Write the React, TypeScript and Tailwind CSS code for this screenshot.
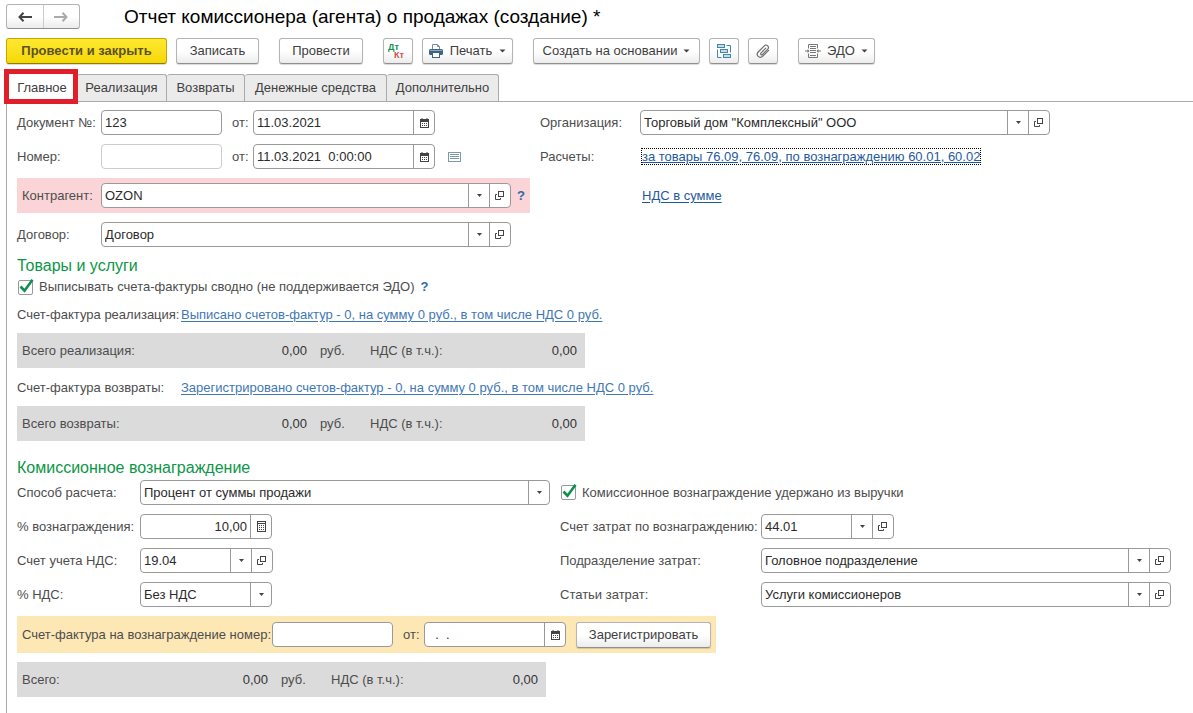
import { useId, type ReactNode } from "react";

function Triangle({ large }: { large?: boolean }) {
  return (
    <svg
      width={large ? 7 : 5}
      height={large ? 4 : 3}
      viewBox={large ? "0 0 7 4" : "0 0 5 3"}
      aria-hidden="true"
      className="shrink-0"
    >
      <path d={large ? "M0.500 0.500h6L3.500 3.500z" : "M0 0h5L2.500 3z"} fill="#444" />
    </svg>
  );
}

function OpenIcon() {
  return (
    <svg width="10" height="10" viewBox="0 0 10 10" fill="none" stroke="#444" aria-hidden="true">
      <rect x="3.5" y="0.5" width="5" height="5" />
      <path d="M2 3.5H0.500v5h5V7" />
    </svg>
  );
}

function CalendarIcon() {
  return (
    <svg width="9" height="10" viewBox="0 0 9 10" aria-hidden="true">
      <path d="M0 1h1.500V0h1v1h4V0h1v1H9v9H0z" fill="#444" />
      <path d="M1 4h7v5H1z" fill="#fff" />
      <path d="M2 5h1v1H2zM4 5h1v1H4zM6 5h1v1H6zM2 7h1v1H2zM4 7h1v1H4zM6 7h1v1H6z" fill="#444" />
    </svg>
  );
}

function CalculatorIcon() {
  return (
    <svg width="9" height="11" viewBox="0 0 9 11" aria-hidden="true">
      <path d="M0 0h9v11H0z" fill="#444" />
      <path d="M1 1h7v1H1zM1 3h7v7H1z" fill="#fff" />
      <path d="M2 4h1v1H2zM4 4h1v1H4zM6 4h1v1H6zM2 6h1v1H2zM4 6h1v1H4zM6 6h1v1H6zM2 8h1v1H2zM4 8h1v1H4zM6 8h1v1H6z" fill="#444" />
    </svg>
  );
}

function ListIcon() {
  return (
    <svg width="13" height="10" viewBox="0 0 13 10" fill="none" stroke="#7d98a8" aria-hidden="true">
      <rect x="0.5" y="0.5" width="12" height="9" />
      <path d="M2 2.5h9M2 4.5h9M2 6.5h9" />
    </svg>
  );
}

function ArrowIcon({ back, color }: { back?: boolean; color: string }) {
  return (
    <svg width="14" height="10" viewBox="0 0 14 10" fill="none" stroke={color} strokeWidth="2" aria-hidden="true">
      {back ? <path d="M5.5 0.8L1.5 5l4 4.2M1.5 5H14" /> : <path d="M8.5 0.8l4 4.2-4 4.2M12.5 5H0" />}
    </svg>
  );
}

function PrinterIcon() {
  return (
    <svg width="14" height="14" viewBox="0 0 14 14" aria-hidden="true">
      <path d="M3.500 5V0.500h5l2 2V5" fill="#fff" stroke="#7a8b99" />
      <path d="M8.500 0.500v2h2" fill="none" stroke="#7a8b99" />
      <rect x="0" y="5" width="14" height="6" rx="1.500" fill="#3d6385" />
      <path d="M1 6.500h12" stroke="#8fabc3" />
      <rect x="3.5" y="8.5" width="7" height="5" fill="#fff" stroke="#3d6385" />
    </svg>
  );
}

function StructureIcon() {
  return (
    <svg width="15" height="15" viewBox="0 0 15 15" fill="none" stroke="#4684a8" aria-hidden="true">
      <rect x="0.5" y="0.5" width="7" height="3" fill="#c5dcea" />
      <rect x="3.5" y="5.5" width="7" height="3" fill="#c5dcea" />
      <rect x="6.5" y="10.5" width="7" height="3" fill="#c5dcea" />
      <path d="M9.500 1.500h4v7M0.500 5.500v8h4" />
    </svg>
  );
}

function ClipIcon() {
  return (
    <svg width="14" height="14" viewBox="0 0 14 14" fill="none" stroke="#6e6e6e" strokeWidth="1.2" strokeLinecap="round" aria-hidden="true">
      <path d="M9.700 4.200L4.900 9.200a1 1 0 0 0 1.500 1.400L11.700 5.200a2.400 2.400 0 0 0-3.400-3.400L2.200 8a3.100 3.100 0 0 0 4.400 4.400L12.600 6.300" />
    </svg>
  );
}

function ExchangeIcon() {
  return (
    <svg width="16" height="14" viewBox="0 0 16 14" fill="none" stroke="#777" aria-hidden="true">
      <path d="M3.500 4.500v-4h9v4M3.500 9.500v4h9v-4" />
      <path d="M5 2.500h6M5 4.500h6M5 6.500h6M5 8.500h6M5 11.500h6" />
      <path d="M0 7h4M12 7h4" />
      <path d="M2.500 5l2 2-2 2zM13.500 5l-2 2 2 2z" fill="#777" stroke="none" />
    </svg>
  );
}

const buttonBase =
  "flex h-[26px] shrink-0 items-center justify-center rounded-[3px] border border-[#b4b4b4] border-b-[#8f8f8f] bg-linear-to-b from-white from-50% to-[#ececec] text-[#404040] shadow-[0_1px_1px_#00000026]";

function ToolButton({ children, className, label }: { children: ReactNode; className: string; label?: string }) {
  return (
    <button type="button" aria-label={label} className={`${buttonBase} ${className}`}>
      {children}
    </button>
  );
}

type CellKind = "menu" | "open" | "date" | "calc";

const cellLabels: Record<CellKind, string> = {
  menu: "Выбрать из списка",
  open: "Открыть",
  date: "Календарь",
  calc: "Калькулятор",
};

function Cell({ kind }: { kind: CellKind }) {
  return (
    <button
      type="button"
      aria-label={cellLabels[kind]}
      className="flex w-[21px] shrink-0 items-center justify-center border-l border-[#999]"
    >
      {kind === "menu" && <Triangle />}
      {kind === "open" && <OpenIcon />}
      {kind === "date" && <CalendarIcon />}
      {kind === "calc" && <CalculatorIcon />}
    </button>
  );
}

interface FieldProps {
  label: string;
  value?: string;
  labelClass?: string;
  boxClass: string;
  cells?: CellKind[];
  right?: boolean;
  faint?: boolean;
}

function Field({ label, value = "", labelClass = "", boxClass, cells = [], right, faint }: FieldProps) {
  const id = useId();
  return (
    <>
      <label htmlFor={id} className={`shrink-0 ${labelClass}`}>
        {label}
      </label>
      <div
        className={`flex h-[25px] min-w-0 overflow-hidden rounded-[4px] border bg-white ${faint ? "border-[#ccc]" : "border-[#999]"} ${boxClass}`}
      >
        <input
          id={id}
          type="text"
          defaultValue={value}
          className={`w-full min-w-0 flex-1 px-[3px] text-[#2b2b2b] outline-none ${right ? "text-right" : ""}`}
        />
        {cells.map((kind) => (
          <Cell key={kind} kind={kind} />
        ))}
      </div>
    </>
  );
}

function SelectField({ label, value, boxClass }: { label: string; value: string; boxClass: string }) {
  const id = useId();
  return (
    <>
      <label htmlFor={id} className="w-[123px] shrink-0">
        {label}
      </label>
      <div className={`grid h-[25px] grid-cols-[1fr_21px] overflow-hidden rounded-[4px] border border-[#999] bg-white ${boxClass}`}>
        <select id={id} className="col-span-2 col-start-1 row-start-1 appearance-none px-[3px] text-[#2b2b2b] outline-none">
          <option>{value}</option>
        </select>
        <span className="pointer-events-none col-start-2 row-start-1 flex items-center justify-center border-l border-[#999]">
          <Triangle />
        </span>
      </div>
    </>
  );
}

function Check({ label }: { label: string }) {
  return (
    <label className="flex items-center gap-[5px]">
      <span className="grid size-[17px] shrink-0">
        <input
          type="checkbox"
          defaultChecked
          className="peer col-start-1 row-start-1 m-px size-[15px] appearance-none rounded-[2px] border border-[#999] bg-white"
        />
        <svg
          viewBox="0 0 17 17"
          fill="none"
          stroke="#0f9050"
          strokeWidth="2.600"
          aria-hidden="true"
          className="pointer-events-none invisible col-start-1 row-start-1 size-[17px] overflow-visible peer-checked:visible"
        >
          <path d="M3.500 7.500l4 4.200L15.500 0.800" />
        </svg>
      </span>
      {label}
    </label>
  );
}

function Heading({ children }: { children: string }) {
  return <h2 className="h-5 text-[16px] leading-5 text-[#0d9648]">{children}</h2>;
}

function Help() {
  return (
    <button type="button" aria-label="Справка" className="text-[13px] font-bold text-[#2a6ba8]">
      ?
    </button>
  );
}

function Totals({ label, className }: { label: string; className: string }) {
  return (
    <div className={`flex h-[35px] items-center bg-[#dbdbdb] pr-2 pl-[5px] ${className}`}>
      <span>{label}</span>
      <span className="ml-auto text-[#333]">0,00</span>
      <span className="ml-[13px] w-[50px]">руб.</span>
      <span className="w-[130px]">НДС (в т.ч.):</span>
      <span className="w-[77px] text-right text-[#333]">0,00</span>
    </div>
  );
}

const linkClass = "text-[#3f78b5] underline underline-offset-2";

const tabs = [
  { name: "Реализация", width: "w-[90px]" },
  { name: "Возвраты", width: "w-[78px]" },
  { name: "Денежные средства", width: "w-[142px]" },
  { name: "Дополнительно", width: "w-[112px]" },
];

export default function App() {
  return (
    <div className="min-h-screen bg-white pt-1 pl-[6px] font-['Liberation_Sans',Arial,sans-serif] text-[13px] leading-5 text-[#4d4d4d]">
      <header className="flex h-[25px] items-center">
        <div className="flex h-[25px] w-[74px] rounded-[3px] border border-[#b4b4b4] border-b-[#8f8f8f] bg-linear-to-b from-white from-50% to-[#ececec]">
          <button type="button" aria-label="Назад" className="flex flex-1 items-center justify-center border-r border-[#ccc]">
            <ArrowIcon back color="#444" />
          </button>
          <button type="button" aria-label="Вперед" className="flex flex-1 items-center justify-center">
            <ArrowIcon color="#aaa" />
          </button>
        </div>
        <h1 className="ml-11 text-[19px] text-black">Отчет комиссионера (агента) о продажах (создание) *</h1>
      </header>

      <div className="mt-[9px] flex gap-[9px]">
        <button
          type="button"
          className="flex h-[26px] w-[161px] shrink-0 items-center justify-center rounded-[3px] border border-[#c4a800] border-b-[#8f7d00] bg-linear-to-b from-[#ffe82e] to-[#f5d800] font-bold text-[#5c5220] shadow-[0_1px_1px_#00000026]"
        >
          Провести и закрыть
        </button>
        <ToolButton className="w-[83px]">Записать</ToolButton>
        <ToolButton className="ml-[11px] w-[84px]">Провести</ToolButton>
        <ToolButton className="ml-[11px] w-[30px]" label="Дт Кт">
          <span className="flex flex-col pr-1 text-left text-[9px] leading-[8px] font-bold">
            <span className="text-[#149155]">Дт</span>
            <span className="pl-[6px] text-[#d0504c]">Кт</span>
          </span>
        </ToolButton>
        <ToolButton className="w-[91px] gap-[7px]">
          <PrinterIcon />
          Печать
          <Triangle large />
        </ToolButton>
        <ToolButton className="ml-[11px] w-[167px] gap-[6px]">
          Создать на основании
          <Triangle large />
        </ToolButton>
        <ToolButton className="w-[30px]" label="Структура подчиненности">
          <StructureIcon />
        </ToolButton>
        <ToolButton className="w-[30px]" label="Файлы">
          <ClipIcon />
        </ToolButton>
        <ToolButton className="ml-[11px] w-[77px] gap-[6px]">
          <ExchangeIcon />
          ЭДО
          <Triangle large />
        </ToolButton>
      </div>

      <nav className="mt-[10px] flex h-[27px]">
        <button type="button" className="relative w-[71px] border-l border-[#aaa] bg-white text-[#404040]">
          Главное
          <span className="pointer-events-none absolute -top-[5px] -right-px -bottom-[3px] -left-[3px] border-[5px] border-[#e01f2b]" />
        </button>
        {tabs.map((tab) => (
          <button
            key={tab.name}
            type="button"
            className={`rounded-t-[3px] border-t border-r border-[#aaa] bg-[#ebebeb] text-[#404040] ${tab.width}`}
          >
            {tab.name}
          </button>
        ))}
      </nav>

      <main className="min-h-[612px] border-t border-l border-[#aaa] pt-2 pl-[10px]">
        <section className="flex">
          <div className="flex w-[523px] shrink-0 flex-col gap-[9px]">
            <div className="flex items-center">
              <Field label="Документ №:" value="123" labelClass="w-[84px]" boxClass="w-[121px]" />
              <Field label="от:" value="11.03.2021" labelClass="w-[31px] pl-[10px]" boxClass="w-[182px]" cells={["date"]} />
            </div>
            <div className="flex items-center">
              <Field label="Номер:" labelClass="w-[84px]" boxClass="w-[121px]" faint />
              <Field label="от:" value="11.03.2021  0:00:00" labelClass="w-[31px] pl-[10px]" boxClass="w-[182px]" cells={["date"]} />
              <button type="button" aria-label="Список" className="ml-[13px]">
                <ListIcon />
              </button>
            </div>
            <div className="flex h-[35px] w-[513px] items-center bg-[#fad4d6] pl-[5px]">
              <Field label="Контрагент:" value="OZON" labelClass="w-[79px]" boxClass="w-[410px]" cells={["menu", "open"]} />
              <span className="ml-[6px]">
                <Help />
              </span>
            </div>
            <div className="flex items-center">
              <Field label="Договор:" value="Договор" labelClass="w-[84px]" boxClass="w-[410px]" cells={["menu", "open"]} />
            </div>
          </div>
          <div className="flex min-w-0 flex-1 flex-col gap-[9px]">
            <div className="flex items-center">
              <Field label="Организация:" value={'Торговый дом "Комплексный" ООО'} labelClass="w-[100px]" boxClass="w-[410px]" cells={["menu", "open"]} />
            </div>
            <div className="flex h-[25px] items-center">
              <span className="w-[101px] shrink-0">Расчеты:</span>
              <a
                href="#settlements"
                className="border border-dotted border-black leading-[15px] whitespace-nowrap text-[#1f5a9e] underline underline-offset-1"
              >
                за товары 76.09, 76.09, по вознаграждению 60.01, 60.02
              </a>
            </div>
            <div className="flex h-[35px] items-center pl-[102px]">
              <a href="#vat" className="text-[#1f5a9e] underline underline-offset-2">
                НДС в сумме
              </a>
            </div>
          </div>
        </section>

        <section className="mt-[9px]">
          <Heading>Товары и услуги</Heading>
          <div className="mt-px flex h-5 items-center gap-[6px]">
            <Check label="Выписывать счета-фактуры сводно (не поддерживается ЭДО)" />
            <Help />
          </div>
          <div className="mt-2 flex">
            <span className="w-[164px]">Счет-фактура реализация:</span>
            <a href="#sales-invoices" className={linkClass}>
              Выписано счетов-фактур - 0, на сумму 0 руб., в том числе НДС 0 руб.
            </a>
          </div>
          <Totals label="Всего реализация:" className="mt-2 w-[568px]" />
          <div className="mt-[10px] flex">
            <span className="w-[164px]">Счет-фактура возвраты:</span>
            <a href="#return-invoices" className={linkClass}>
              Зарегистрировано счетов-фактур - 0, на сумму 0 руб., в том числе НДС 0 руб.
            </a>
          </div>
          <Totals label="Всего возвраты:" className="mt-2 w-[568px]" />
        </section>

        <section className="mt-[17px]">
          <Heading>Комиссионное вознаграждение</Heading>
          <div className="mt-[2px] flex">
            <div className="flex w-[543px] shrink-0 flex-col gap-[9px]">
              <div className="flex items-center">
                <SelectField label="Способ расчета:" value="Процент от суммы продажи" boxClass="w-[410px]" />
              </div>
              <div className="flex items-center">
                <Field label="% вознаграждения:" value="10,00" labelClass="w-[123px]" boxClass="w-[132px]" cells={["calc"]} right />
              </div>
              <div className="flex items-center">
                <Field label="Счет учета НДС:" value="19.04" labelClass="w-[123px]" boxClass="w-[133px]" cells={["menu", "open"]} />
              </div>
              <div className="flex items-center">
                <SelectField label="% НДС:" value="Без НДС" boxClass="w-[132px]" />
              </div>
            </div>
            <div className="flex min-w-0 flex-1 flex-col gap-[9px]">
              <div className="flex h-[25px] items-center">
                <Check label="Комиссионное вознаграждение удержано из выручки" />
              </div>
              <div className="flex items-center">
                <Field label="Счет затрат по вознаграждению:" value="44.01" labelClass="w-[201px]" boxClass="w-[133px]" cells={["menu", "open"]} />
              </div>
              <div className="flex items-center">
                <Field label="Подразделение затрат:" value="Головное подразделение" labelClass="w-[201px]" boxClass="w-[410px]" cells={["menu", "open"]} />
              </div>
              <div className="flex items-center">
                <Field label="Статьи затрат:" value="Услуги комиссионеров" labelClass="w-[201px]" boxClass="w-[410px]" cells={["menu", "open"]} />
              </div>
            </div>
          </div>
          <div className="mt-[9px] flex h-[37px] w-[699px] items-center bg-[#fde7b5] pl-[5px]">
            <Field label="Счет-фактура на вознаграждение номер:" labelClass="w-[250px]" boxClass="w-[121px]" />
            <Field label="от:" value="  .  ." labelClass="w-[31px] pl-[10px]" boxClass="w-[142px]" cells={["date"]} />
            <ToolButton className="ml-[10px] w-[135px]">Зарегистрировать</ToolButton>
          </div>
          <Totals label="Всего:" className="mt-[9px] w-[529px]" />
        </section>
      </main>
    </div>
  );
}
